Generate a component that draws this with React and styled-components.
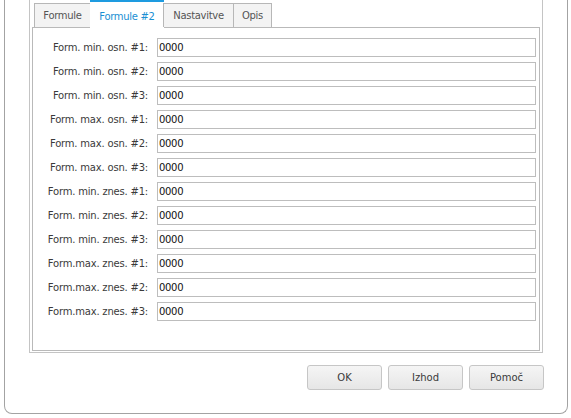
import styled, { createGlobalStyle } from "styled-components";

const GlobalStyle = createGlobalStyle`
  body {
    margin: 0;
    background: #ffffff;
    font-family: "DejaVu Sans", Verdana, sans-serif;
  }
`;

const labels = [
  "Form. min. osn. #1:",
  "Form. min. osn. #2:",
  "Form. min. osn. #3:",
  "Form. max. osn. #1:",
  "Form. max. osn. #2:",
  "Form. max. osn. #3:",
  "Form. min. znes. #1:",
  "Form. min. znes. #2:",
  "Form. min. znes. #3:",
  "Form.max. znes. #1:",
  "Form.max. znes. #2:",
  "Form.max. znes. #3:",
];

const tabs = [
  { text: "Formule", width: 57 },
  { text: "Formule #2", width: 73, active: true },
  { text: "Nastavitve", width: 71 },
  { text: "Opis", width: 39 },
];

export default function App() {
  return (
    <>
      <GlobalStyle />
      <Frame>
        <Group>
          <TabBar>
            {tabs.map((t) => (
              <Tab key={t.text} $active={t.active} $width={t.width}>
                {t.text}
              </Tab>
            ))}
          </TabBar>
          <Panel>
            <Form>
              {labels.map((l) => (
                <Row key={l}>
                  <Label>{l}</Label>
                  <Input defaultValue="0000" />
                </Row>
              ))}
            </Form>
          </Panel>
        </Group>
        <Buttons>
          <Button>OK</Button>
          <Button>Izhod</Button>
          <Button>Pomoč</Button>
        </Buttons>
      </Frame>
    </>
  );
}

const Frame = styled.div`
  box-sizing: border-box;
  width: 564px;
  height: 414px;
  margin-left: 4px;
  padding: 0 24px;
  border: 1px solid #a3a3a3;
  border-top: none;
  border-radius: 0 0 8px 8px;
  display: flex;
  flex-direction: column;
`;

const Group = styled.div`
  box-sizing: border-box;
  width: 514px;
  height: 353px;
  border: 1px solid #c4c4c4;
  border-top: none;
  padding: 0 2px 1px 2px;
  display: flex;
  flex-direction: column;
`;

const TabBar = styled.div`
  height: 28px;
  display: flex;
  align-items: flex-end;
  padding-left: 2px;
  position: relative;
  z-index: 1;
  margin-bottom: -1px;
`;

const Tab = styled.div`
  box-sizing: border-box;
  width: ${(p) => p.$width}px;
  height: ${(p) => (p.$active ? 28 : 24)}px;
  margin-bottom: ${(p) => (p.$active ? 0 : 1)}px;
  display: flex;
  align-items: center;
  justify-content: center;
  font-size: 10px;
  letter-spacing: -0.3px;
  color: ${(p) => (p.$active ? "#1a8fd3" : "#555555")};
  background: ${(p) => (p.$active ? "#ffffff" : "#f3f3f3")};
  border: 1px solid #b7b7b7;
  border-bottom: none;
  border-top: ${(p) => (p.$active ? "2px solid #1e9be0" : "1px solid #b7b7b7")};
  ${(p) =>
    p.$active &&
    `
    border-left: none;
    border-right: none;
    margin-left: -1px;
    width: ${p.$width + 1}px;
    padding-top: 2px;
  `}
  & + & {
    margin-left: -1px;
  }
`;

const Panel = styled.div`
  flex: 1;
  border: 1px solid #b9b9b9;
  padding: 10px 3px 0 0;
`;

const Form = styled.div`
  display: flex;
  flex-direction: column;
  gap: 5px;
`;

const Row = styled.div`
  display: grid;
  grid-template-columns: 115px 1fr;
  column-gap: 9px;
  align-items: center;
`;

const Label = styled.span`
  text-align: right;
  font-size: 10px;
  letter-spacing: -0.2px;
  color: #3a3a3a;
  white-space: nowrap;
`;

const Input = styled.input`
  box-sizing: border-box;
  height: 19px;
  width: 100%;
  margin: 0;
  border: 1px solid #bdbdbd;
  padding: 0 1px;
  font-family: "DejaVu Sans", Verdana, sans-serif;
  font-size: 10px;
  letter-spacing: -0.3px;
  color: #111111;
  outline: none;
`;

const Buttons = styled.div`
  display: flex;
  justify-content: flex-end;
  gap: 6px;
  margin-top: 12px;
  margin-right: -1px;
`;

const Button = styled.button`
  box-sizing: border-box;
  width: 75px;
  height: 25px;
  border: 1px solid #c6c6c6;
  border-radius: 3px;
  background: linear-gradient(#f5f5f5, #e6e6e6);
  font-family: "DejaVu Sans", Verdana, sans-serif;
  font-size: 10px;
  font-weight: normal;
  color: #3a3a3a;
  padding: 0;
`;
